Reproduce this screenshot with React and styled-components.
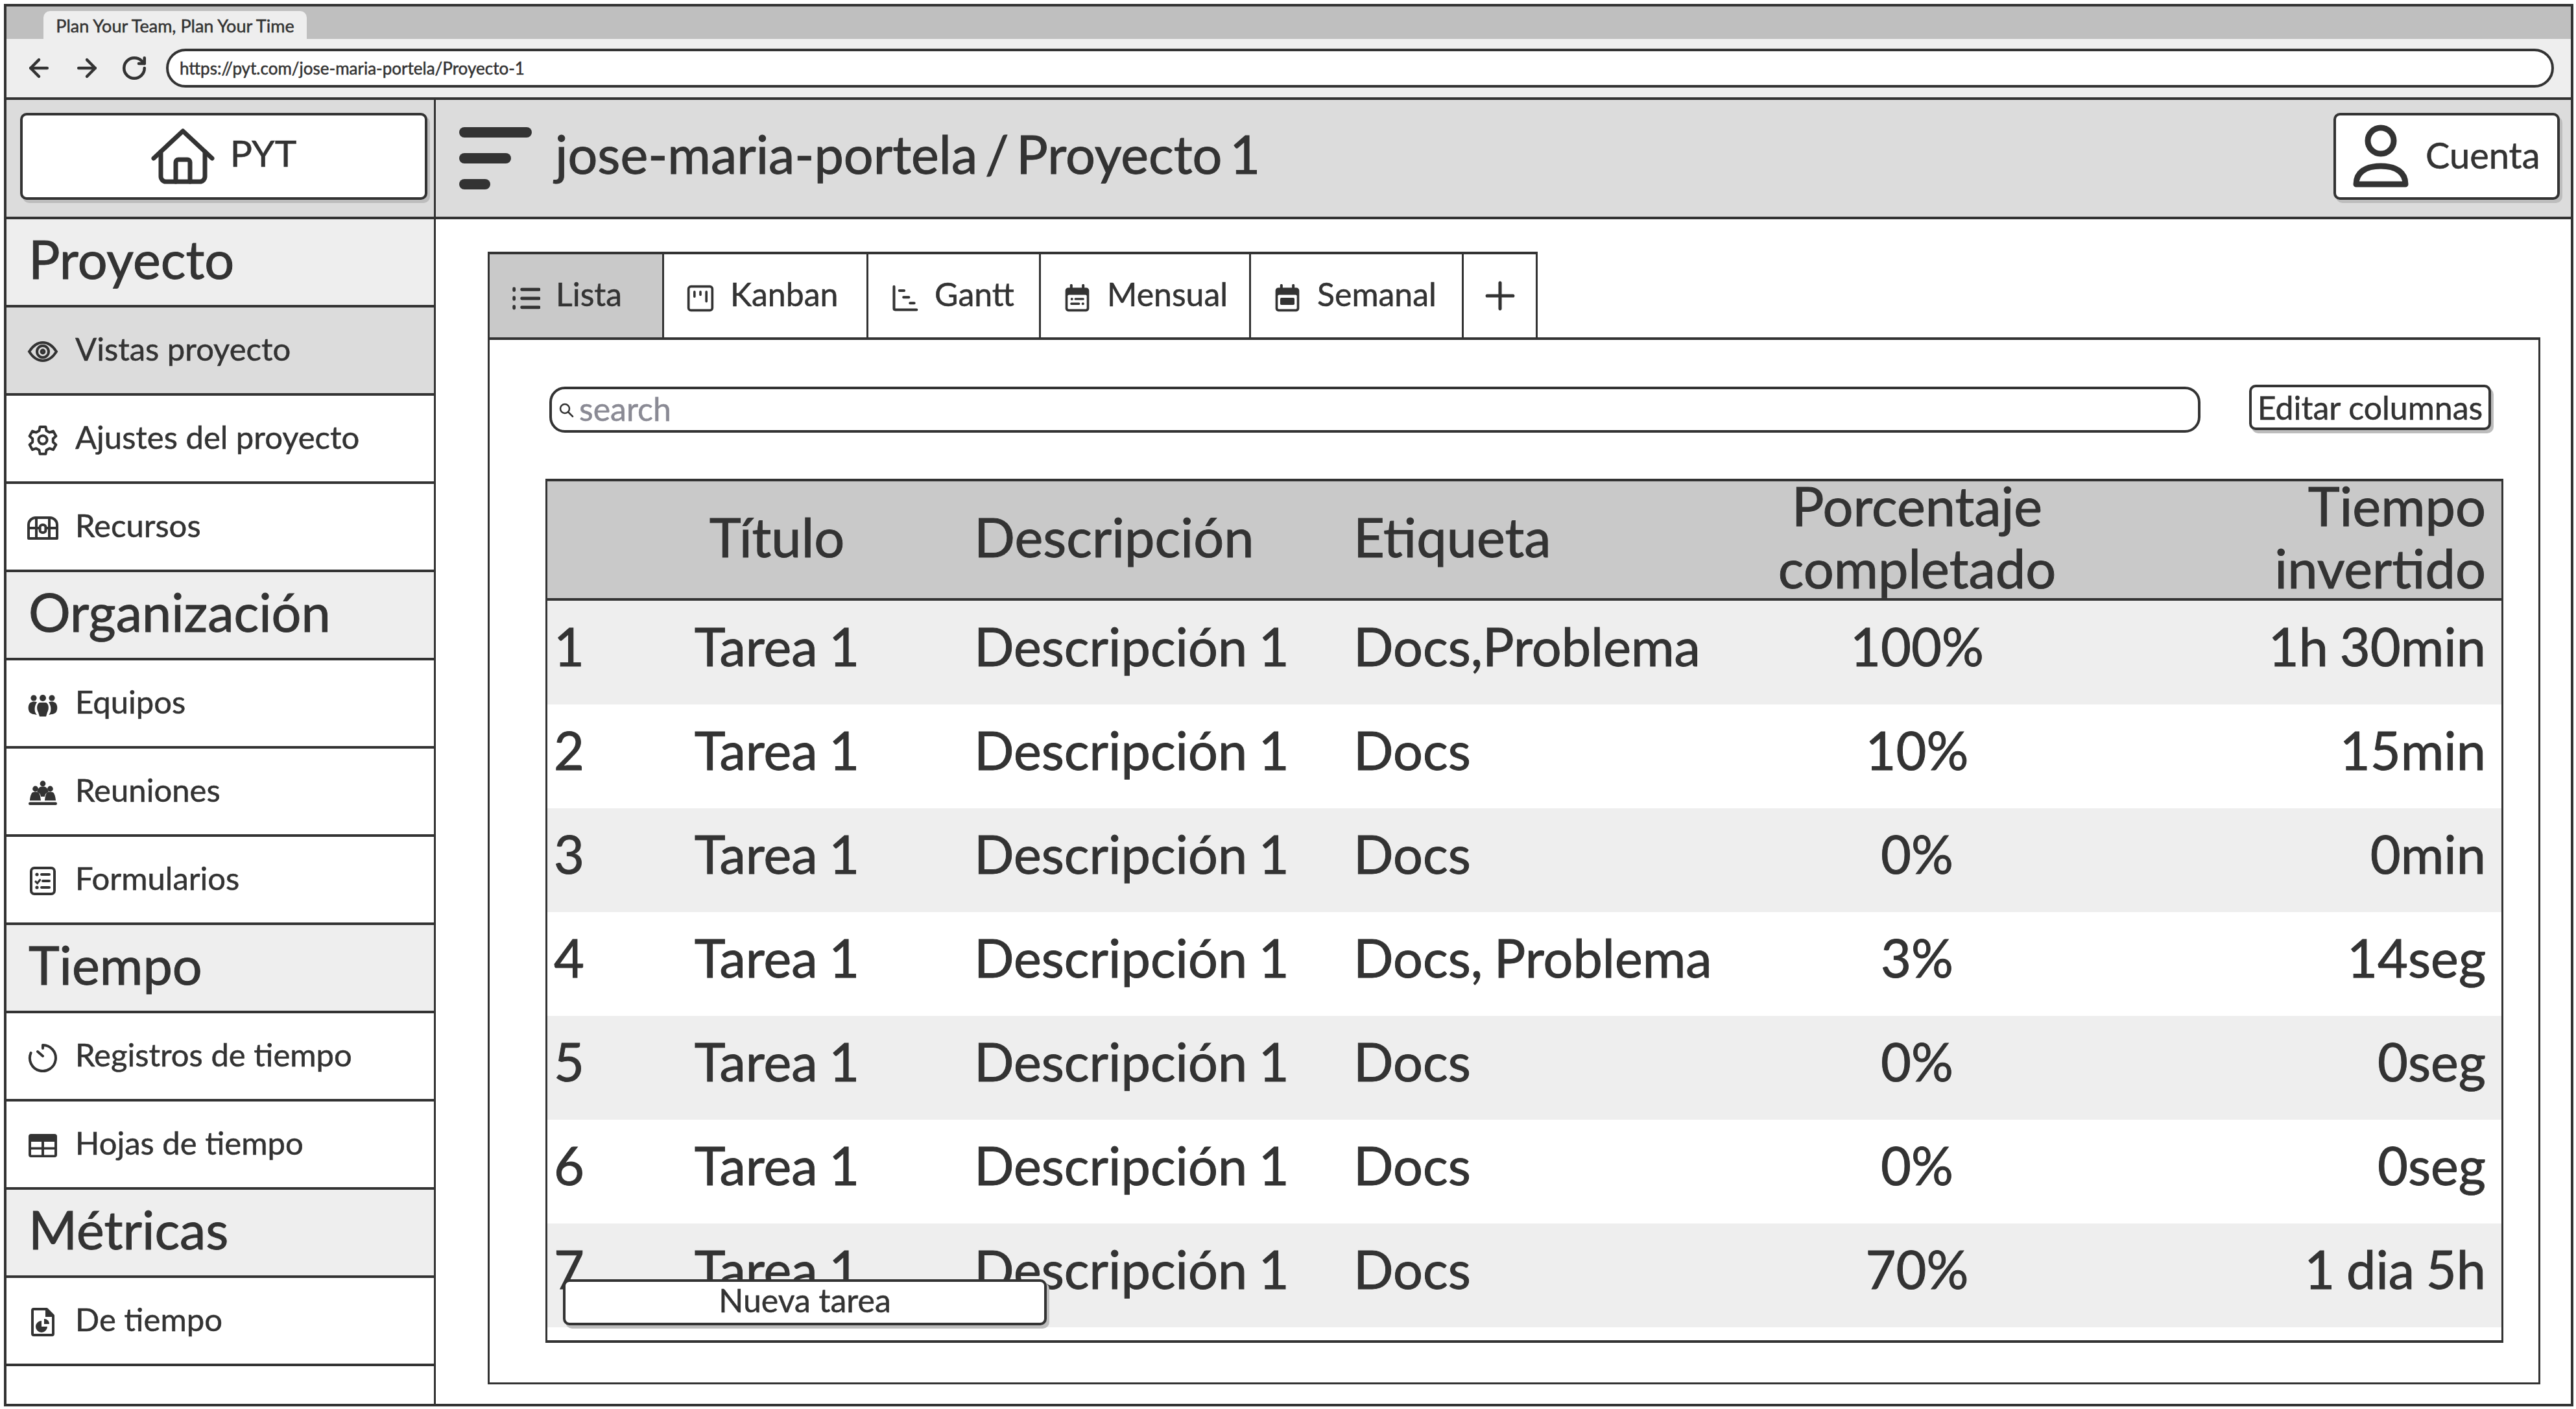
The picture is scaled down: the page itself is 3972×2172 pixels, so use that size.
import React from 'react';
import styled, { createGlobalStyle } from 'styled-components';
import { ArrowLeft, ArrowRight, RotateCw, Plus } from 'lucide-react';

const INK = '#333333';

const sideSections = [
  { title: 'Proyecto', items: [
    { label: 'Vistas proyecto', icon: 'eye', active: true },
    { label: 'Ajustes del proyecto', icon: 'gear' },
    { label: 'Recursos', icon: 'chest' },
  ] },
  { title: 'Organización', items: [
    { label: 'Equipos', icon: 'team' },
    { label: 'Reuniones', icon: 'meeting' },
    { label: 'Formularios', icon: 'form' },
  ] },
  { title: 'Tiempo', items: [
    { label: 'Registros de tiempo', icon: 'timer' },
    { label: 'Hojas de tiempo', icon: 'sheet' },
  ] },
  { title: 'Métricas', items: [
    { label: 'De tiempo', icon: 'report' },
  ] },
];

const tabs = [
  { label: 'Lista', icon: 'list', width: 272, active: true },
  { label: 'Kanban', icon: 'kanban', width: 315 },
  { label: 'Gantt', icon: 'gantt', width: 266 },
  { label: 'Mensual', icon: 'month', width: 324 },
  { label: 'Semanal', icon: 'week', width: 328 },
];

const rows = [
  ['1', 'Docs,Problema', '100%', '1h 30min'],
  ['2', 'Docs', '10%', '15min'],
  ['3', 'Docs', '0%', '0min'],
  ['4', 'Docs, Problema', '3%', '14seg'],
  ['5', 'Docs', '0%', '0seg'],
  ['6', 'Docs', '0%', '0seg'],
  ['7', 'Docs', '70%', '1 dia 5h'],
];

// wireframe icons, drawn on a 24 box
const glyphs = {
  eye: (
    <g fill="none" stroke={INK} strokeWidth="2">
      <path d="M1.5 12C5 6.5 8.5 5 12 5s7 1.5 10.5 7c-3.500 5.500-7 7-10.500 7s-7-1.500-10.500-7z" />
      <circle cx="12" cy="12" r="4.500" />
      <circle cx="12" cy="12" r="1.200" />
    </g>
  ),
  gear: (
    <g fill="none" stroke={INK} strokeWidth="2" strokeLinejoin="round">
      <path d="M9.800 2h4.400l.6 3 2.300 1.300 2.900-1 2.200 3.800-2.300 2 0 2.700 2.300 2-2.200 3.800-2.900-1-2.300 1.300-.6 3H9.800l-.6-3-2.300-1.300-2.900 1-2.200-3.800 2.300-2 0-2.700-2.300-2 2.200-3.800 2.900 1L9.200 5z" />
      <circle cx="12" cy="12" r="3.300" />
    </g>
  ),
  chest: (
    <g fill="none" stroke={INK} strokeWidth="2">
      <path d="M1 20V9.500A5.500 5.500 0 0 1 6.500 4h11A5.500 5.500 0 0 1 23 9.500V20z" strokeLinejoin="round" />
      <path d="M7 4v16M17 4v16M1 12h8M15 12h8" />
      <rect x="9.800" y="9.500" width="4.400" height="6" rx="1.800" />
    </g>
  ),
  team: (
    <g fill={INK}>
      <circle cx="5" cy="7" r="2.300" />
      <circle cx="12" cy="7" r="2.500" />
      <circle cx="19" cy="7" r="2.300" />
      <path d="M7.500 20c-2-.5-5-.5-6-2.500-1-2-1-5.500 1-7 1.500-1 3.500-1 5-.3-2 2.500-2.500 7-.1 9.800z" />
      <path d="M16.500 20c2-.5 5-.5 6-2.500 1-2 1-5.500-1-7-1.500-1-3.500-1-5-.3 2 2.500 2.500 7 .1 9.800z" />
      <path d="M9.500 10.500h5c2.200 1 2.500 5 1 7.500l-1 3.200h-5l-1-3.200c-1.500-2.500-1.200-6.500 1-7.500z" />
    </g>
  ),
  meeting: (
    <g fill={INK}>
      <circle cx="12" cy="5" r="2.200" />
      <circle cx="6.300" cy="9" r="2.200" />
      <circle cx="17.700" cy="9" r="2.200" />
      <path d="M8.500 9c1-1.500 2-1.700 3.500-1.700s2.500.2 3.500 1.700l1 2.500c-2 .3-2.800 2-3 3.500h-3c-.2-1.500-1-3.200-3-3.500z" />
      <path d="M4 11.800c1-.5 3.500-.5 4.500 0 1 .7 1.500 2.200 2 6.200H2c.2-2.500.8-5 2-6.200zM15.500 11.800c1-.5 3.500-.5 4.500 0 1.200 1.200 1.800 3.700 2 6.200h-8.500c.5-4 1-5.500 2-6.200z" />
      <rect x="1" y="19.300" width="22" height="2.200" rx="1.100" />
    </g>
  ),
  form: (
    <g fill="none" stroke={INK} strokeWidth="2" strokeLinecap="round">
      <rect x="3" y="2" width="18" height="20" rx="2.500" />
      <path d="M11 7h6M12 12h5M11 17h6" />
      <path d="M6.500 12.500l1.300 1.200 2-2.500" strokeWidth="1.600" />
      <circle cx="7.500" cy="7" r="1.300" fill={INK} stroke="none" />
      <circle cx="7.500" cy="17" r="1.300" fill={INK} stroke="none" />
    </g>
  ),
  timer: (
    <g fill="none" stroke={INK} strokeWidth="2" strokeLinecap="round">
      <path d="M12 2.500a10 10 0 1 1-9.200 6M12 2.500v2.500M8 7.500l4 3.500" />
    </g>
  ),
  sheet: (
    <g>
      <rect x="1" y="3" width="22" height="18" rx="2" fill={INK} />
      <rect x="3" y="9" width="8" height="4.200" fill="#fff" />
      <rect x="13" y="9" width="8" height="4.200" fill="#fff" />
      <rect x="3" y="15" width="8" height="4.200" fill="#fff" />
      <rect x="13" y="15" width="8" height="4.200" fill="#fff" />
    </g>
  ),
  report: (
    <g>
      <path d="M5 2h10l5 5v14a1 1 0 0 1-1 1H5a1 1 0 0 1-1-1V3a1 1 0 0 1 1-1z" fill="none" stroke={INK} strokeWidth="2" strokeLinejoin="round" />
      <path d="M14 2v6h6z" fill={INK} />
      <path d="M11 11a4.500 4.500 0 1 0 4.500 4.500H11z" fill={INK} />
      <path d="M13 9.500a4 4 0 0 1 4 4h-4z" fill={INK} />
    </g>
  ),
  list: (
    <g fill="none" stroke={INK} strokeWidth="2.600" strokeLinecap="round">
      <path d="M8.500 4.500H23M8.500 12H23M8.500 19.500H23M2 3.800v1.400M2 11.300v1.400M2 18.800v1.400" />
    </g>
  ),
  kanban: (
    <g fill="none" stroke={INK} strokeWidth="2" strokeLinecap="round">
      <rect x="2" y="2" width="20" height="20" rx="2" />
      <path d="M7 6.500v4M12 6.500v2.500M17 6.500v8" />
    </g>
  ),
  gantt: (
    <g fill="none" stroke={INK} strokeWidth="2.200" strokeLinecap="round">
      <path d="M3 2v18.500a1 1 0 0 0 1 1h18M7.500 5.500h4M11 11h4.500M16.500 16h3.500" />
    </g>
  ),
  month: (
    <g>
      <path d="M7 1v4M17 1v4" stroke={INK} strokeWidth="2.200" strokeLinecap="round" />
      <rect x="2" y="3" width="20" height="20" rx="2.500" fill={INK} />
      <rect x="4" y="9" width="16" height="12" rx="1" fill="#fff" />
      <path d="M10.500 12.500h6.500M7 16.500h6.500" stroke={INK} strokeWidth="1.800" strokeLinecap="round" />
      <circle cx="7.500" cy="12.500" r="1.100" fill={INK} />
      <circle cx="16.800" cy="16.500" r="1.100" fill={INK} />
    </g>
  ),
  week: (
    <g>
      <path d="M7 1v4M17 1v4" stroke={INK} strokeWidth="2.200" strokeLinecap="round" />
      <rect x="2" y="3" width="20" height="20" rx="2.500" fill={INK} />
      <rect x="4" y="9" width="16" height="12" rx="1" fill="#fff" />
      <rect x="6" y="11.500" width="12" height="6" rx="1" fill={INK} />
    </g>
  ),
};

function Glyph({ name, size }) {
  return (
    <svg width={size} height={size} viewBox="0 0 24 24" aria-hidden="true">
      {glyphs[name]}
    </svg>
  );
}

function App() {
  return (
    <Page>
      <GlobalStyle />
      <Frame>
        <TabStrip>
          <BrowserTab>Plan Your Team, Plan Your Time</BrowserTab>
        </TabStrip>
        <Toolbar>
          <NavButtons>
            <ArrowLeft size={44} strokeWidth={2.4} color={INK} />
            <ArrowRight size={44} strokeWidth={2.4} color={INK} />
            <RotateCw size={42} strokeWidth={2.6} color={INK} />
          </NavButtons>
          <UrlBar>https://pyt.com/jose-maria-portela/Proyecto-1</UrlBar>
        </Toolbar>

        <Workspace>
          <Sidebar>
            <LogoCell>
              <LogoButton>
                <svg width="98" height="86" viewBox="0 0 98 86" fill="none" stroke={INK} strokeWidth="7" strokeLinecap="round" strokeLinejoin="round">
                  <path d="M4 46 49 4l45 42" />
                  <path d="M15 36v38a8 8 0 0 0 8 8h52a8 8 0 0 0 8-8V36" />
                  <path d="M38 82V52a4 4 0 0 1 4-4h14a4 4 0 0 1 4 4v30" />
                </svg>
                <LogoText>PYT</LogoText>
              </LogoButton>
            </LogoCell>
            {sideSections.map((section) => (
              <React.Fragment key={section.title}>
                <SectionHeading>{section.title}</SectionHeading>
                {section.items.map((item) => (
                  <SideItem key={item.label} $active={item.active}>
                    <SideIcon><Glyph name={item.icon} size={48} /></SideIcon>
                    <SideLabel>{item.label}</SideLabel>
                  </SideItem>
                ))}
              </React.Fragment>
            ))}
          </Sidebar>

          <Main>
            <Header>
              <Burger>
                <BurgerBar $w={112} />
                <BurgerBar $w={80} />
                <BurgerBar $w={48} />
              </Burger>
              <PageTitle>jose-maria-portela / Proyecto 1</PageTitle>
              <AccountButton>
                <svg width="86" height="98" viewBox="0 0 86 98" fill="none" stroke={INK} strokeWidth="9" strokeLinejoin="round">
                  <ellipse cx="43" cy="25" rx="20" ry="20" />
                  <path d="M5 92c0-18 14-28 38-28s38 10 38 28z" />
                </svg>
                <AccountText>Cuenta</AccountText>
              </AccountButton>
            </Header>

            <Content>
              <TabRow>
                {tabs.map((tab) => (
                  <ViewTab key={tab.label} $w={tab.width} $active={tab.active}>
                    <TabIcon><Glyph name={tab.icon} size={44} /></TabIcon>
                    <TabLabel>{tab.label}</TabLabel>
                  </ViewTab>
                ))}
                <ViewTab $w={114} $center>
                  <Plus size={68} strokeWidth={1.8} color={INK} />
                </ViewTab>
              </TabRow>

              <Panel>
                <SearchRow>
                  <SearchBox>
                    <svg width="24" height="24" viewBox="0 0 24 24" fill="none" stroke={INK} strokeWidth="2.500" strokeLinecap="round">
                      <circle cx="10" cy="10" r="7" />
                      <path d="M15.500 15.500 22 22" />
                    </svg>
                    <SearchHint>search</SearchHint>
                  </SearchBox>
                  <EditButton>Editar columnas</EditButton>
                </SearchRow>

                <TaskTable>
                  <HeadRow>
                    <span />
                    <Cell $align="center">Título</Cell>
                    <Cell>Descripción</Cell>
                    <Cell>Etiqueta</Cell>
                    <Cell $align="center">Porcentaje<br />completado</Cell>
                    <Cell $align="right">Tiempo<br />invertido</Cell>
                  </HeadRow>
                  {rows.map(([num, tag, pct, time], i) => (
                    <TaskRow key={num} $shaded={i % 2 === 0}>
                      <Cell>{num}</Cell>
                      <Cell $align="center">Tarea 1</Cell>
                      <Cell>Descripción 1</Cell>
                      <Cell>{tag}</Cell>
                      <Cell $align="center">{pct}</Cell>
                      <Cell $align="right">{time}</Cell>
                    </TaskRow>
                  ))}
                  <NewTaskButton>Nueva tarea</NewTaskButton>
                </TaskTable>
              </Panel>
            </Content>
          </Main>
        </Workspace>
      </Frame>
    </Page>
  );
}

const GlobalStyle = createGlobalStyle`
  html, body {
    margin: 0;
    padding: 0;
    background: #fff;
  }
  * {
    box-sizing: border-box;
  }
`;

const Page = styled.div`
  width: 3972px;
  height: 2172px;
  padding: 6px 4px 4px 6px;
  font-family: "Lato", "Noto Sans", sans-serif;
  color: ${INK};
  -webkit-text-stroke: 0.5px ${INK};
  overflow: hidden;
`;

const Frame = styled.div`
  display: flex;
  flex-direction: column;
  height: 100%;
  border: 4px solid ${INK};
`;

const TabStrip = styled.div`
  display: flex;
  align-items: flex-end;
  height: 50px;
  padding-left: 57px;
  background: #bfbfbf;
  flex: none;
`;

const BrowserTab = styled.div`
  display: flex;
  align-items: center;
  justify-content: center;
  width: 406px;
  height: 43px;
  padding-top: 2px;
  background: #eeeeee;
  border-radius: 10px 10px 0 0;
  font-size: 27px;
`;

const Toolbar = styled.div`
  display: flex;
  align-items: center;
  height: 90px;
  padding: 0 26px 0 28px;
  background: #eeeeee;
  flex: none;
`;

const NavButtons = styled.div`
  display: flex;
  align-items: center;
  gap: 30px;
  width: 218px;
  flex: none;
`;

const UrlBar = styled.div`
  display: flex;
  align-items: center;
  flex: 1;
  height: 60px;
  padding-left: 17px;
  background: #fff;
  border: 4px solid ${INK};
  border-radius: 30px;
  font-size: 26px;
`;

const Workspace = styled.div`
  display: flex;
  flex: 1;
  min-height: 0;
`;

const Sidebar = styled.nav`
  display: flex;
  flex-direction: column;
  width: 662px;
  flex: none;
  border-right: 3px solid ${INK};
`;

const LogoCell = styled.div`
  display: flex;
  align-items: center;
  height: 188px;
  padding: 0 10px 6px 21px;
  background: #dcdcdc;
  border-top: 4px solid ${INK};
  border-bottom: 4px solid ${INK};
  flex: none;
`;

const LogoButton = styled.div`
  display: flex;
  align-items: center;
  justify-content: center;
  gap: 24px;
  width: 100%;
  height: 134px;
  background: #fff;
  border: 4px solid ${INK};
  border-radius: 10px;
  box-shadow: 4px 5px 0 #bdbdbd;
`;

const LogoText = styled.span`
  font-size: 57px;
  margin-bottom: 12px;
`;

const SectionHeading = styled.h2`
  display: flex;
  align-items: center;
  height: 136px;
  margin: 0;
  padding: 0 0 12px 34px;
  background: #eeeeee;
  border-bottom: 4px solid ${INK};
  font-size: 81px;
  font-weight: 400;
  -webkit-text-stroke: 1px ${INK};
  flex: none;
`;

const SideItem = styled.div`
  display: flex;
  align-items: center;
  gap: 26px;
  height: 136px;
  padding: 0 0 4px 32px;
  background: ${(p) => (p.$active ? '#dcdcdc' : '#fff')};
  border-bottom: 4px solid ${INK};
  flex: none;
`;

const SideIcon = styled.span`
  display: flex;
  margin-top: 8px;
`;

const SideLabel = styled.span`
  font-size: 49px;
  margin-bottom: 2px;
`;

const Main = styled.main`
  display: flex;
  flex-direction: column;
  flex: 1;
  min-width: 0;
`;

const Header = styled.header`
  display: flex;
  align-items: center;
  height: 188px;
  padding: 0 17px 6px 36px;
  background: #dcdcdc;
  border-top: 4px solid ${INK};
  border-bottom: 4px solid ${INK};
  flex: none;
`;

const Burger = styled.div`
  display: flex;
  flex-direction: column;
  gap: 24px;
  width: 148px;
  margin-top: 6px;
  flex: none;
`;

const BurgerBar = styled.div`
  width: ${(p) => p.$w}px;
  height: 16px;
  background: ${INK};
  border-radius: 8px;
`;

const PageTitle = styled.h1`
  flex: 1;
  margin: 0 0 10px;
  font-size: 81px;
  font-weight: 400;
  word-spacing: -9px;
  -webkit-text-stroke: 1px ${INK};
  white-space: nowrap;
`;

const AccountButton = styled.div`
  display: flex;
  align-items: center;
  gap: 26px;
  width: 349px;
  height: 134px;
  padding-left: 26px;
  background: #fff;
  border: 4px solid ${INK};
  border-radius: 10px;
  box-shadow: 4px 5px 0 #bdbdbd;
  flex: none;
`;

const AccountText = styled.span`
  font-size: 56px;
  margin-bottom: 6px;
`;

const Content = styled.div`
  display: flex;
  flex-direction: column;
  flex: 1;
  min-height: 0;
  padding: 50px 47px 30px 80px;
`;

const TabRow = styled.div`
  display: flex;
  height: 136px;
  flex: none;
`;

const ViewTab = styled.div`
  display: flex;
  align-items: center;
  justify-content: ${(p) => (p.$center ? 'center' : 'flex-start')};
  gap: 24px;
  width: ${(p) => p.$w}px;
  padding-left: ${(p) => (p.$center ? 0 : 34)}px;
  background: ${(p) => (p.$active ? '#c9c9c9' : '#fff')};
  border: solid ${INK};
  border-width: 4px 3px 4px 0;
  font-size: 50px;
  flex: none;

  &:first-child {
    border-left-width: 3px;
  }
`;

const TabIcon = styled.span`
  display: flex;
  margin-top: 8px;
`;

const TabLabel = styled.span`
  margin-bottom: 6px;
`;

const Panel = styled.section`
  display: flex;
  flex-direction: column;
  flex: 1;
  min-height: 0;
  margin-top: -4px;
  padding: 72px 0 0 86px;
  border: 3px solid ${INK};
  border-top-width: 4px;
`;

const SearchRow = styled.div`
  display: flex;
  align-items: flex-start;
  gap: 75px;
  margin: 0 73px 0 6px;
  flex: none;
`;

const SearchBox = styled.div`
  display: flex;
  align-items: center;
  gap: 8px;
  flex: 1;
  height: 71px;
  padding-left: 10px;
  background: #fff;
  border: 4px solid ${INK};
  border-radius: 24px;
`;

const SearchHint = styled.span`
  color: #8a8a94;
  -webkit-text-stroke: 0.5px #8a8a94;
  font-size: 50px;
  margin-bottom: 4px;
`;

const EditButton = styled.div`
  display: flex;
  align-items: center;
  justify-content: center;
  width: 373px;
  height: 70px;
  margin-top: -3px;
  background: #fff;
  border: 4px solid ${INK};
  border-radius: 10px;
  box-shadow: 4px 5px 0 #bdbdbd;
  font-size: 50px;
  flex: none;
`;

const TaskTable = styled.div`
  position: relative;
  display: flex;
  flex-direction: column;
  height: 1332px;
  margin: 71px 54px 0 0;
  border: solid ${INK};
  border-width: 4px 3px;
  font-size: 81px;
  word-spacing: -3px;
  -webkit-text-stroke: 1px ${INK};
  flex: none;
`;

const columns = '50px 608px 585px 593px 552px 626px';

const HeadRow = styled.div`
  display: grid;
  grid-template-columns: ${columns};
  align-items: center;
  align-content: center;
  height: 184px;
  padding-bottom: 10px;
  background: #c9c9c9;
  border-bottom: 4px solid ${INK};
  font-size: 83px;
  line-height: 96px;
  flex: none;
`;

const TaskRow = styled.div`
  display: grid;
  grid-template-columns: ${columns};
  align-items: center;
  height: 160px;
  padding-bottom: 21px;
  background: ${(p) => (p.$shaded ? '#eeeeee' : '#fff')};
  flex: none;
`;

const Cell = styled.div`
  text-align: ${(p) => p.$align || 'left'};
  white-space: nowrap;
  padding-right: ${(p) => (p.$align === 'right' ? 25 : 0)}px;

  &:first-child {
    padding-left: 10px;
  }
`;

const NewTaskButton = styled.div`
  position: absolute;
  left: 24px;
  bottom: 23px;
  display: flex;
  align-items: center;
  justify-content: center;
  width: 746px;
  height: 71px;
  padding-bottom: 8px;
  background: #fff;
  border: 4px solid ${INK};
  border-radius: 10px;
  box-shadow: 4px 5px 0 #bdbdbd;
  font-size: 50px;
  word-spacing: 0;
  -webkit-text-stroke: 0.5px ${INK};
`;

export default App;
